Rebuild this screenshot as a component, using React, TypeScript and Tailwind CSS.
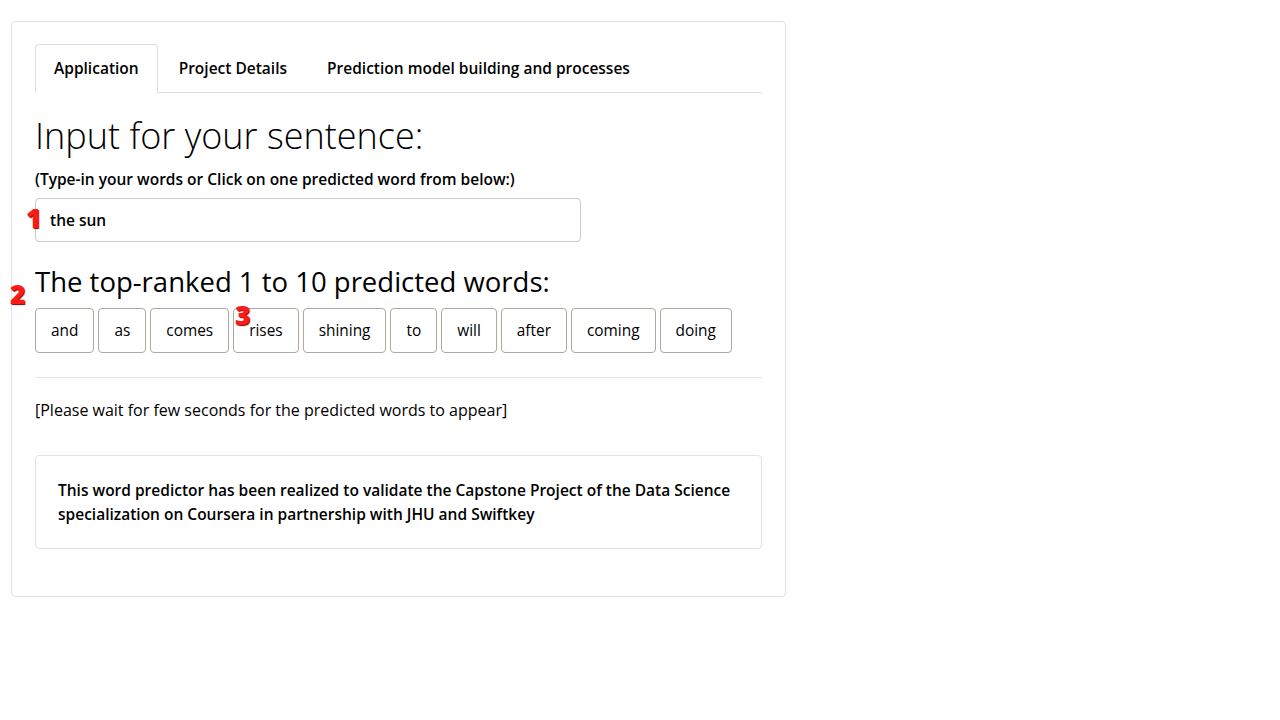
import { useState } from 'react';

const words = ['and', 'as', 'comes', 'rises', 'shining', 'to', 'will', 'after', 'coming', 'doing'];
const tabs = ['Application', 'Project Details', 'Prediction model building and processes'];

function Mark({ n, className }: { n: string; className: string }) {
    // red annotation digits over the page
    return (
        <span
            className={`absolute text-[26px] font-extrabold leading-none text-[#ff1a1a] [text-shadow:1px_1px_1px_#7a0000] ${className}`}
        >
            {n}
        </span>
    );
}

export default function App() {
    const [active, setActive] = useState(0);
    const [text, setText] = useState('the sun');

    return (
        <div className="min-h-[720px] bg-white text-black font-['Open_Sans',sans-serif]">
            <div className="relative ml-[11px] mt-[21px] w-[775px] rounded border border-[#e3e3e3] px-[23px] pt-[22px] pb-[47px]">
                <nav className="flex gap-[2px] border-b border-[#dddddd]">
                    {tabs.map((t, i) => (
                        <button
                            key={t}
                            onClick={() => setActive(i)}
                            className={`-mb-px h-[49px] px-[18px] text-[15.5px] font-semibold rounded-t ${
                                active === i ? 'border border-[#dddddd] border-b-white bg-white' : 'border border-transparent'
                            }`}
                        >
                            {t}
                        </button>
                    ))}
                </nav>

                <h1 className="mt-[21px] text-[36px] font-light leading-[44px]">Input for your sentence:</h1>
                <label className="mt-[11px] block text-[15.5px] font-semibold leading-[21px]">
                    (Type-in your words or Click on one predicted word from below:)
                </label>
                <input
                    value={text}
                    onChange={(e) => setText(e.target.value)}
                    className="mt-[8px] block h-[44px] w-[546px] rounded border border-[#cccccc] px-[14px] text-[15.5px] font-semibold outline-none"
                />

                <h2 className="mt-[23px] text-[27.5px] leading-[34px]">The top-ranked 1 to 10 predicted words:</h2>
                <div className="mt-[9px] flex gap-[4px]">
                    {words.map((w) => (
                        <button
                            key={w}
                            onClick={() => setText(text + ' ' + w)}
                            className="h-[45px] rounded border border-[#aea8a0] px-[15px] text-[15.4px]"
                        >
                            {w}
                        </button>
                    ))}
                </div>

                <hr className="mt-[24px] border-[#e5e5e5]" />
                <p className="mt-[22px] text-[16px] leading-[20px]">[Please wait for few seconds for the predicted words to appear]</p>

                <div className="mt-[35px] rounded border border-[#e3e3e3] px-[22px] pt-[22px] pb-[22px]">
                    <p className="text-[15.5px] font-semibold leading-[24px]">
                        This word predictor has been realized to validate the Capstone Project of the Data Science specialization on Coursera in partnership with JHU and Swiftkey
                    </p>
                </div>

                <Mark n="1" className="left-[14px] top-[183px]" />
                <Mark n="2" className="left-[-2px] top-[259px]" />
                <Mark n="3" className="left-[223px] top-[280px]" />
            </div>
        </div>
    );
}
